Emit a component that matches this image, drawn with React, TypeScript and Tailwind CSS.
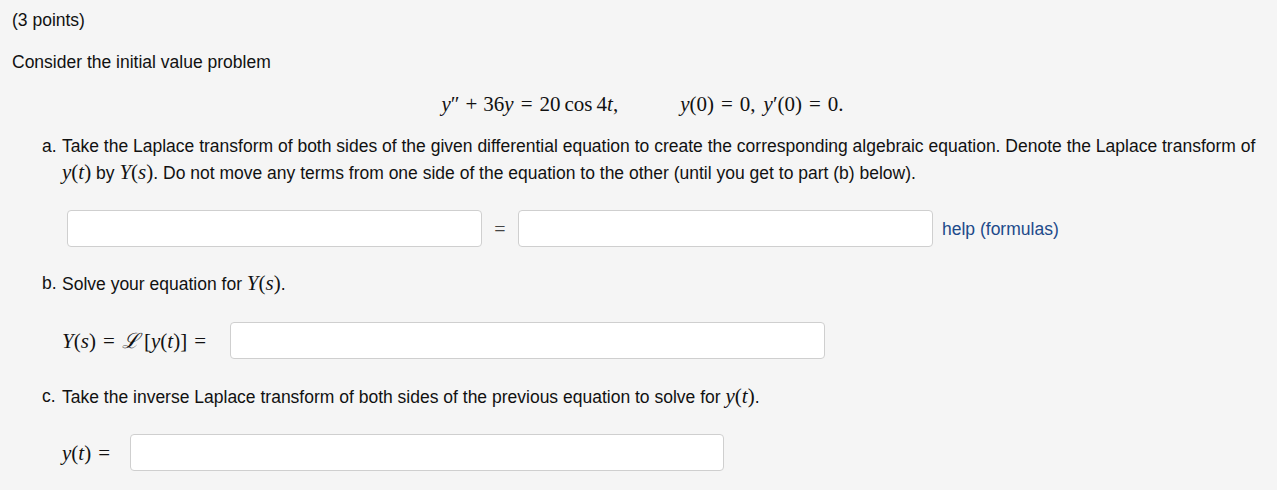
import React from 'react';

const serif = "font-['Liberation_Serif',serif]";

function V({ children }: { children: React.ReactNode }) {
  return <span className="italic">{children}</span>;
}

// relation / binary operator with TeX-like spacing
function Op({ children, w = 'rel' }: { children: React.ReactNode; w?: 'rel' | 'bin' }) {
  return <span className={w === 'rel' ? 'mx-[7px]' : 'mx-[6px]'}>{children}</span>;
}

function Field({ className = '' }: { className?: string }) {
  return (
    <input
      type="text"
      className={`h-[37px] rounded-[4px] border border-[#cfcfcf] bg-white px-2 outline-none ${className}`}
    />
  );
}

function Item({ mark, children }: { mark: string; children: React.ReactNode }) {
  return (
    <div className="flex">
      <span className="w-[20px] shrink-0">{mark}</span>
      <div className="flex-1">{children}</div>
    </div>
  );
}

export default function App() {
  return (
    <div className="min-h-[490px] bg-[#f5f5f5] font-['Liberation_Sans',Arial,sans-serif] text-[17.5px] leading-[26px] text-[#111]">
      <div className="pl-[12px] pr-[12px] pt-[7px]">
        <p>(3 points)</p>
        <p className="mt-[16px]">Consider the initial value problem</p>

        <div className={`mt-[16px] flex justify-center pl-[8px] text-[21px] ${serif}`}>
          <span>
            <V>y</V>″<Op w="bin">+</Op>36<V>y</V>
            <Op>=</Op>20<span className="ml-[4px]">cos</span>
            <span className="ml-[4px]">4</span>
            <V>t</V>,
          </span>
          <span className="ml-[62px]">
            <V>y</V>(0)<Op>=</Op>0,<span className="ml-[8px]" />
            <V>y</V>′(0)<Op>=</Op>0.
          </span>
        </div>

        <div className="mt-[16px] pl-[30px]">
          <Item mark="a.">
            <p>
              Take the Laplace transform of both sides of the given differential equation to create the
              corresponding algebraic equation. Denote the Laplace transform of{' '}
              <span className={`text-[21px] ${serif}`}>
                <V>y</V>(<V>t</V>)
              </span>{' '}
              by{' '}
              <span className={`text-[21px] ${serif}`}>
                <V>Y</V>(<V>s</V>)
              </span>
              . Do not move any terms from one side of the equation to the other (until you get to part (b) below).
            </p>
            <div className="mt-[24px] flex items-center pl-[5px]">
              <Field className="w-[415px]" />
              <span className={`w-[36px] text-center text-[20px] text-[#444] ${serif}`}>=</span>
              <Field className="w-[415px]" />
              <a className="ml-[9px] text-[#1d4a8a]">help (formulas)</a>
            </div>
          </Item>

          <div className="mt-[23px]">
            <Item mark="b.">
              <p>
                Solve your equation for{' '}
                <span className={`text-[21px] ${serif}`}>
                  <V>Y</V>(<V>s</V>)
                </span>
                .
              </p>
              <div className="mt-[25px] flex items-center">
                <span className={`text-[21px] ${serif}`}>
                  <V>Y</V>(<V>s</V>)<Op>=</Op>
                  <span className="italic">ℒ</span> [<V>y</V>(<V>t</V>)]<Op>=</Op>
                </span>
                <Field className="ml-[17px] w-[595px]" />
              </div>
            </Item>
          </div>

          <div className="mt-[24px]">
            <Item mark="c.">
              <p>
                Take the inverse Laplace transform of both sides of the previous equation to solve for{' '}
                <span className={`text-[21px] ${serif}`}>
                  <V>y</V>(<V>t</V>)
                </span>
                .
              </p>
              <div className="mt-[24px] flex items-center">
                <span className={`text-[21px] ${serif}`}>
                  <V>y</V>(<V>t</V>)<Op>=</Op>
                </span>
                <Field className="ml-[13px] w-[594px]" />
              </div>
            </Item>
          </div>
        </div>
      </div>
    </div>
  );
}
